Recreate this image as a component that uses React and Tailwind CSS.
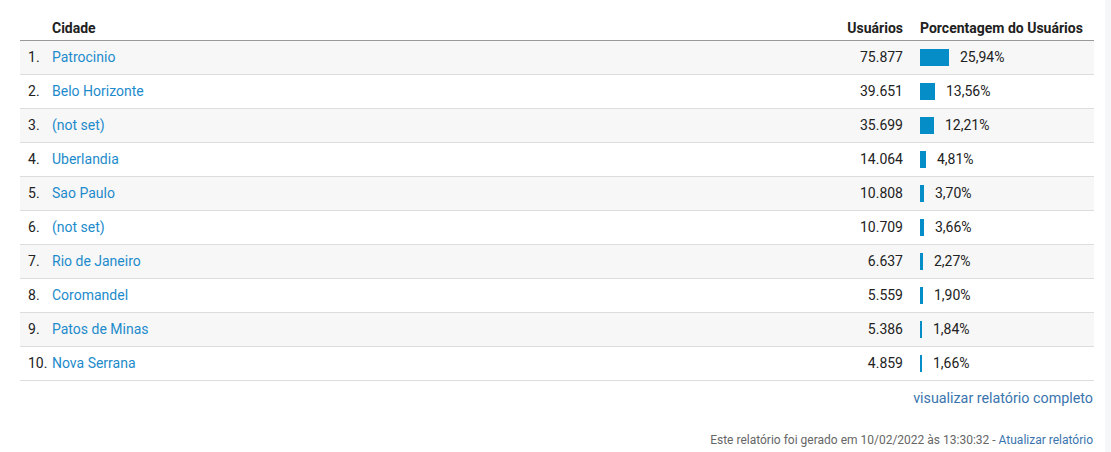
const rows = [
    { city: "Patrocinio", users: "75.877", pct: 25.94 },
    { city: "Belo Horizonte", users: "39.651", pct: 13.56 },
    { city: "(not set)", users: "35.699", pct: 12.21 },
    { city: "Uberlandia", users: "14.064", pct: 4.81 },
    { city: "Sao Paulo", users: "10.808", pct: 3.7 },
    { city: "(not set)", users: "10.709", pct: 3.66 },
    { city: "Rio de Janeiro", users: "6.637", pct: 2.27 },
    { city: "Coromandel", users: "5.559", pct: 1.9 },
    { city: "Patos de Minas", users: "5.386", pct: 1.84 },
    { city: "Nova Serrana", users: "4.859", pct: 1.66 },
];

function fmt(n) {
    return n.toFixed(2).replace(".", ",") + "%";
}

export default function App() {
    return (
        <div className="flex min-h-[452px] bg-white font-['Roboto','Liberation_Sans',sans-serif] text-[14px] leading-[16px] text-[#222]">
            <div className="w-[1105px] pl-[20px] pr-[11px]">
                <table className="w-full table-fixed border-collapse">
                    <thead>
                        <tr className="h-[40px] border-b border-[#999]">
                            <th className="w-[32px]" />
                            <th className="pb-[4px] align-bottom text-left font-bold text-[#212121]">Cidade</th>
                            <th className="w-[120px] pb-[4px] pr-[17px] align-bottom text-right font-bold text-[#212121]">Usuários</th>
                            <th className="w-[174px] pb-[4px] align-bottom text-left font-bold text-[#212121]">Porcentagem do Usuários</th>
                        </tr>
                    </thead>
                    <tbody>
                        {rows.map((r, i) => (
                            <tr key={i} className={`h-[34px] border-b border-[#ddd] ${i % 2 === 0 ? "bg-[#f7f7f7]" : "bg-white"}`}>
                                <td className="pl-[8px] whitespace-nowrap">{i + 1}.</td>
                                <td className="text-[#1d8bcb]">{r.city}</td>
                                <td className="pr-[17px] text-right">{r.users}</td>
                                <td>
                                    <div className="flex items-center">
                                        <div className="h-[17px] bg-[#058dc7]" style={{ width: Math.ceil(r.pct * 1.08) + "px" }} />
                                        <span className="ml-[11px]">{fmt(r.pct)}</span>
                                    </div>
                                </td>
                            </tr>
                        ))}
                    </tbody>
                </table>
                <div className="mt-[7px] flex justify-end pr-[1px]">
                    <a className="text-[14.3px] leading-[20px] text-[#3a74ae]">visualizar relatório completo</a>
                </div>
                <div className="mt-[24px] flex justify-end pr-[1px] text-[12px] leading-[16px] text-[#666]">
                    <span>Este relatório foi gerado em 10/02/2022 às 13:30:32 - </span>
                    <a className="ml-[3px] text-[#3a74ae]">Atualizar relatório</a>
                </div>
            </div>
            <div className="flex-1 bg-[#f5f7f9]" />
        </div>
    );
}
